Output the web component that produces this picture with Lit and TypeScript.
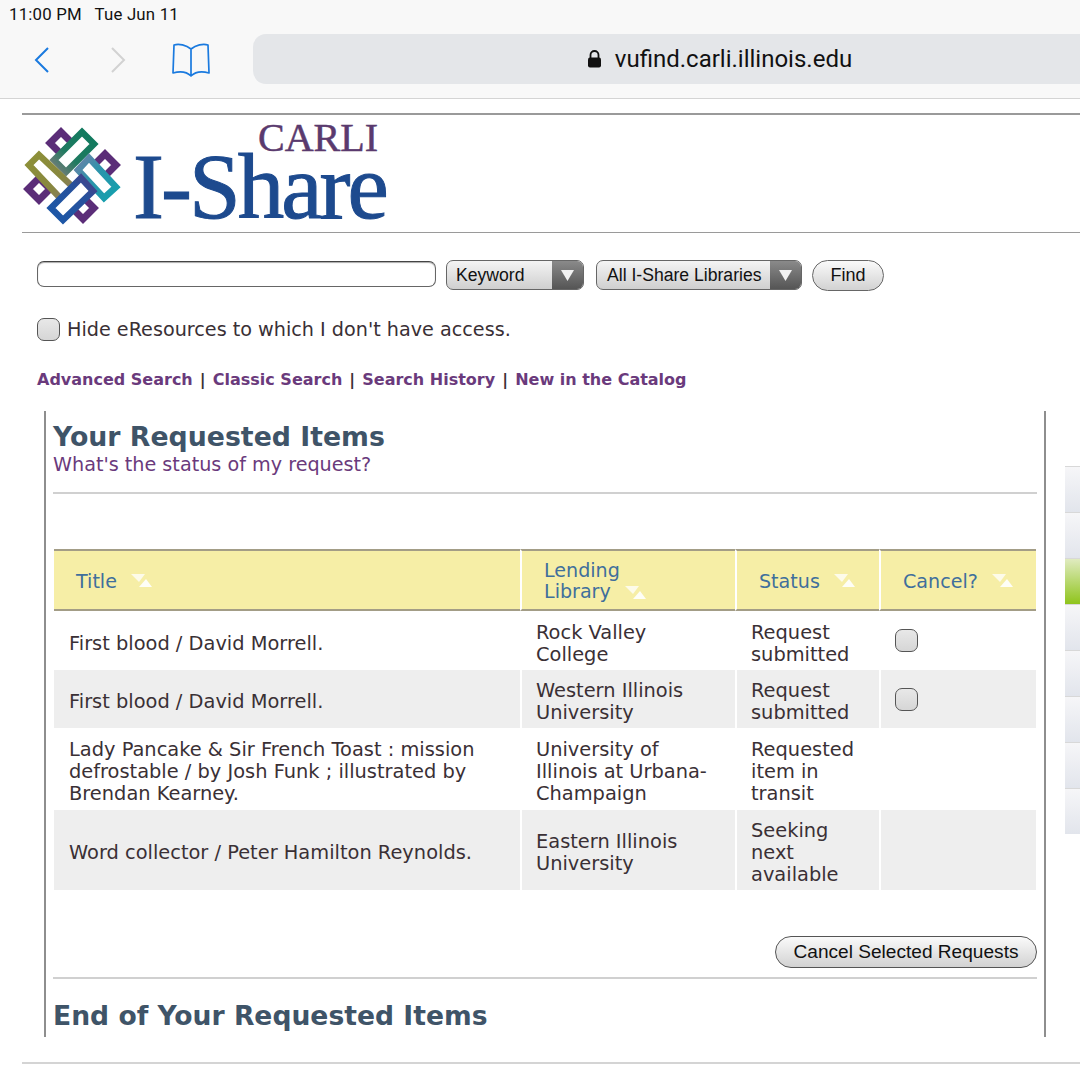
import { LitElement, html, css, svg } from "lit";
import { customElement } from "lit/decorators.js";

const sortIcon = html`<svg class="sort" width="22" height="14" viewBox="0 0 22 14"><polygon points="0,0 14,0 8,8" fill="#fff" opacity=".75"/><polygon points="8,13 21,13 15,5" fill="#fff" opacity=".9"/></svg>`;

const knot = html`<svg class="knot" width="100" height="100" viewBox="21 125 100 100">
  <defs>
    <linearGradient id="g1" x1="1" y1="0" x2="0" y2="1"><stop offset="0" stop-color="#0f7a5e"/><stop offset=".6" stop-color="#1f7a60"/><stop offset="1" stop-color="#7d7d7d"/></linearGradient>
    <linearGradient id="g2" x1="0" y1="0" x2="1" y2="1"><stop offset="0" stop-color="#8d9038"/><stop offset=".6" stop-color="#88873f"/><stop offset="1" stop-color="#85757a"/></linearGradient>
    <linearGradient id="g3" x1="1" y1="1" x2="0" y2="0"><stop offset="0" stop-color="#12a0ad"/><stop offset=".6" stop-color="#2e93ab"/><stop offset="1" stop-color="#6c82a8"/></linearGradient>
    <linearGradient id="g4" x1="0" y1="1" x2="1" y2="0"><stop offset="0" stop-color="#1c58a8"/><stop offset=".7" stop-color="#27509b"/><stop offset="1" stop-color="#4a3f86"/></linearGradient>
  </defs>
  ${svg`<g fill="#fff" stroke="#5b2d78" stroke-width="7">
    <polygon points="60,131 71,142 60,153 49,142"/>
    <polygon points="104,153 115,164 104,175 93,164"/>
    <polygon points="82,196 93,207 82,218 71,207"/>
    <polygon points="38,177 49,188 38,199 27,188"/>
  </g>
  <g fill="#fff" stroke-width="6.5" stroke-linejoin="miter">
    <polygon points="81,131 93,143 65,171 53,159" stroke="url(#g1)"/>
    <polygon points="38,154 28,164 62,200 74,188" stroke="url(#g2)"/>
    <polygon points="88,157 115,186 103,197 77,169" stroke="url(#g3)"/>
    <polygon points="80,177 92,190 62,219 50,207" stroke="url(#g4)"/>
  </g>`}
</svg>`;

interface Row { title: string[]; lib: string[]; status: string[]; check: boolean; cls: string; }
const rows: Row[] = [
  { title: ["First blood / David Morrell."], lib: ["Rock Valley", "College"], status: ["Request", "submitted"], check: true, cls: "r1" },
  { title: ["First blood / David Morrell."], lib: ["Western Illinois", "University"], status: ["Request", "submitted"], check: true, cls: "r2 alt" },
  { title: ["Lady Pancake & Sir French Toast : mission", "defrostable / by Josh Funk ; illustrated by", "Brendan Kearney."], lib: ["University of", "Illinois at Urbana-", "Champaign"], status: ["Requested", "item in", "transit"], check: false, cls: "r3" },
  { title: ["Word collector / Peter Hamilton Reynolds."], lib: ["Eastern Illinois", "University"], status: ["Seeking", "next", "available"], check: false, cls: "r4 alt" },
];
const lines = (l: string[]) => l.map((t, i) => html`${i ? html`<br />` : ""}${t}`);
const tabs = [0, 1, 2, 3, 4, 5, 6, 7];

@customElement("app-root")
export class AppRoot extends LitElement {
  static styles = css`
    :host { display: block; position: relative; width: 1080px; height: 1080px; overflow: hidden; background: #fff; font-family: "DejaVu Sans", sans-serif; color: #3a3035; }
    .chrome { height: 98px; background: #f8f8f8; border-bottom: 1px solid #d4d4d4; box-sizing: content-box; }
    .status { height: 34px; padding-left: 9px; font: 16.8px/29px Roboto, sans-serif; color: #111; white-space: pre; letter-spacing: .2px; }
    .nav { display: flex; align-items: flex-start; height: 50px; }
    .nav svg { display: block; flex: none; }
    .back { margin: 13px 0 0 34px; }
    .fwd { margin: 13px 0 0 60px; }
    .book { margin: 9px 0 0 46px; }
    .pill { flex: none; margin-left: 43px; width: 932px; height: 50px; background: #e4e6e9; border-radius: 13px; display: flex; align-items: center; justify-content: center; gap: 12px; font: 24px Roboto, sans-serif; color: #111; }
    .top-rule { margin: 14px 0 0 22px; height: 2px; background: #9a9a9a; }
    .logo { display: flex; height: 117px; margin-left: 22px; }
    .knot { margin-top: 11px; flex: none; }
    .brand { margin-left: 11px; width: 252px; font-family: "Liberation Serif", serif; }
    .carli { font-size: 40px; line-height: 38px; height: 32px; padding-top: 4px; text-align: right; padding-right: 7px; color: #5a3a6e; -webkit-text-stroke: .5px #5a3a6e; }
    .ishare { font-size: 93px; line-height: 72px; letter-spacing: -3px; color: #1d4a8e; white-space: nowrap; -webkit-text-stroke: 1px #1d4a8e; }
    .rule2 { margin-left: 22px; height: 1px; background: #9a9a9a; }
    .search { display: flex; align-items: flex-start; margin: 27px 0 0 37px; }
    .text-in { width: 399px; height: 26px; box-sizing: border-box; margin-top: 1px; border: 1.5px solid #666; border-top-color: #444; border-radius: 7px; background: #fff; box-shadow: inset 0 1px 1px #aaa; }
    .select { height: 30px; box-sizing: border-box; border: 1px solid #666; border-radius: 7px; display: flex; overflow: hidden; font: 17.6px/28px "Liberation Sans", sans-serif; color: #111; background: linear-gradient(#f4f4f4, #cfcfcf); }
    .select span { flex: 1; padding-left: 9px; white-space: nowrap; }
    .lib span { padding-left: 10px; }
    .select i { display: flex; align-items: center; justify-content: center; flex: none; width: 31px; background: linear-gradient(#8a8a8a, #555); }
    .kw { width: 138px; margin-left: 10px; }
    .lib { width: 206px; margin-left: 12px; }
    .find { width: 72px; height: 31px; margin-left: 10px; }
    button { padding: 0; font: 18px "Liberation Sans", sans-serif; color: #111; border: 1px solid #666; border-radius: 16px; background: linear-gradient(#fafafa, #d2d2d2); }
    .check { display: block; box-sizing: border-box; width: 23px; height: 23px; border: 1.5px solid #555; border-radius: 7px; background: linear-gradient(#e8e8e8, #d6d6d6); }
    .hide { display: flex; align-items: center; margin: 26px 0 0 37px; height: 24px; font-size: 19.2px; gap: 7px; }
    .hide span:last-child { padding-top: 1px; }
    .links { margin: 28px 0 0 37px; height: 22px; font-size: 16px; line-height: 22px; font-weight: 700; color: #6a3a7c; white-space: pre; }
    .links b { color: #3a3035; padding: 0 1.5px; }
    .panel { box-sizing: border-box; margin: 20px 0 0 44px; width: 1002px; height: 626px; border-left: 2px solid #8e8e8e; border-right: 2px solid #8e8e8e; padding: 8px 7px 0 7px; }
    h1 { margin: 0; font-size: 26.75px; line-height: 36px; font-weight: 700; color: #3f5468; }
    .sub { font-size: 19.2px; line-height: 20px; color: #6a3a7c; }
    .rule3 { height: 2px; background: #d0d0d0; margin-top: 17px; }
    table { margin-top: 55px; width: 982px; margin-left: 1px; table-layout: fixed; border-collapse: separate; border-spacing: 0; font-size: 19.4px; line-height: 21.8px; }
    th { height: 58px; padding: 0; background: #f6eea6; border-top: 2px solid #a39d86; border-bottom: 2px solid #a39d86; border-left: 2px solid #fff; font-size: 19.1px; font-weight: 400; text-align: left; color: #3f6f9c; white-space: nowrap; line-height: 21px; }
    th:first-child, td:first-child { border-left: 0; }
    th .in { display: flex; align-items: center; padding: 2px 0 0 22px; }
    th .lend { align-items: flex-end; }
    .sort { margin: 0 0 0 14px; flex: none; }
    th .lend .sort { margin: 0 0 2px -26px; }
    .lendtext { width: 107px; }
    td { box-sizing: border-box; padding: 6px 0 0 14px; border-left: 2px solid #fff; vertical-align: middle; color: #3a3035; white-space: nowrap; }
    td:first-child { padding-left: 15px; }
    td .check { margin-top: -6px; }
    .alt td { background: #eeeeee; }
    .r1 td { height: 59px; }
    .r2 td { height: 58px; }
    .r3 td { height: 82px; }
    .r4 td { height: 80px; }
    .actions { display: flex; justify-content: flex-end; margin-top: 46px; }
    .cancel { width: 262px; height: 32px; border-color: #555; font-size: 19.1px; }
    .rule4 { height: 2px; background: #d0d0d0; margin-top: 9px; }
    .end { margin-top: 19px; font-size: 26.6px; }
    .foot { margin: 25px 0 0 22px; height: 2px; background: #d4d4d4; }
    .tabs { position: absolute; left: 1065px; top: 466px; width: 15px; }
    .tabs div { height: 46px; box-sizing: border-box; border-top: 1px solid #d8d8d8; background: linear-gradient(#f6f6f8, #e2e5ec); }
    .tabs .on { background: linear-gradient(#e0ebc0, #8fc41c); }
  `;

  render() {
    return html`
      <div class="chrome">
        <div class="status">11:00 PM   Tue Jun 11</div>
        <div class="nav">
          <svg class="back" width="16" height="26" viewBox="0 0 16 26"><path d="M14 1 L2 13 L14 25" fill="none" stroke="#1a7adf" stroke-width="2"/></svg>
          <svg class="fwd" width="16" height="26" viewBox="0 0 16 26"><path d="M2 1 L14 13 L2 25" fill="none" stroke="#d2d2d2" stroke-width="2"/></svg>
          <svg class="book" width="38" height="36" viewBox="0 0 38 36"><path d="M19 6 C14 2 7 .5 2 2 L1 30 C8 28 15 29 19 33 C23 29 30 28 37 30 L36 2 C31 .5 24 2 19 6 Z M19 6 V33" fill="none" stroke="#1a7adf" stroke-width="1.700" stroke-linejoin="round"/></svg>
          <div class="pill">
            <svg width="17" height="20" viewBox="0 0 17 20"><path d="M4.500 9 V6 a4 4 0 0 1 8 0 V9" fill="none" stroke="#111" stroke-width="1.800"/><rect x="2" y="8.500" width="13" height="10" rx="2" fill="#111"/></svg>
            <span>vufind.carli.illinois.edu</span>
          </div>
        </div>
      </div>
      <div class="top-rule"></div>
      <div class="logo">
        ${knot}
        <div class="brand">
          <div class="carli">CARLI</div>
          <div class="ishare">I-Share</div>
        </div>
      </div>
      <div class="rule2"></div>
      <div class="search">
        <div class="text-in"></div>
        <div class="select kw"><span>Keyword</span><i><svg width="13" height="11" viewBox="0 0 13 11"><polygon points="0,0 13,0 6.500,11" fill="#f2f2f2"/></svg></i></div>
        <div class="select lib"><span>All I-Share Libraries</span><i><svg width="13" height="11" viewBox="0 0 13 11"><polygon points="0,0 13,0 6.500,11" fill="#f2f2f2"/></svg></i></div>
        <button class="find">Find</button>
      </div>
      <div class="hide"><span class="check"></span><span>Hide eResources to which I don't have access.</span></div>
      <div class="links">Advanced Search <b>|</b> Classic Search <b>|</b> Search History <b>|</b> New in the Catalog</div>
      <div class="panel">
        <h1>Your Requested Items</h1>
        <div class="sub">What's the status of my request?</div>
        <div class="rule3"></div>
        <table>
          <colgroup><col style="width:466px" /><col style="width:215px" /><col style="width:144px" /><col style="width:157px" /></colgroup>
          <thead>
            <tr>
              <th><div class="in">Title${sortIcon}</div></th>
              <th><div class="in lend"><span class="lendtext">Lending<br />Library</span>${sortIcon}</div></th>
              <th><div class="in">Status${sortIcon}</div></th>
              <th><div class="in">Cancel?${sortIcon}</div></th>
            </tr>
          </thead>
          <tbody>
            ${rows.map((r) => html`<tr class=${r.cls}>
              <td>${lines(r.title)}</td>
              <td>${lines(r.lib)}</td>
              <td>${lines(r.status)}</td>
              <td>${r.check ? html`<span class="check"></span>` : ""}</td>
            </tr>`)}
          </tbody>
        </table>
        <div class="actions"><button class="cancel">Cancel Selected Requests</button></div>
        <div class="rule4"></div>
        <h1 class="end">End of Your Requested Items</h1>
      </div>
      <div class="foot"></div>
      <div class="tabs">${tabs.map((i) => html`<div class=${i === 2 ? "on" : ""}></div>`)}</div>
    `;
  }
}
